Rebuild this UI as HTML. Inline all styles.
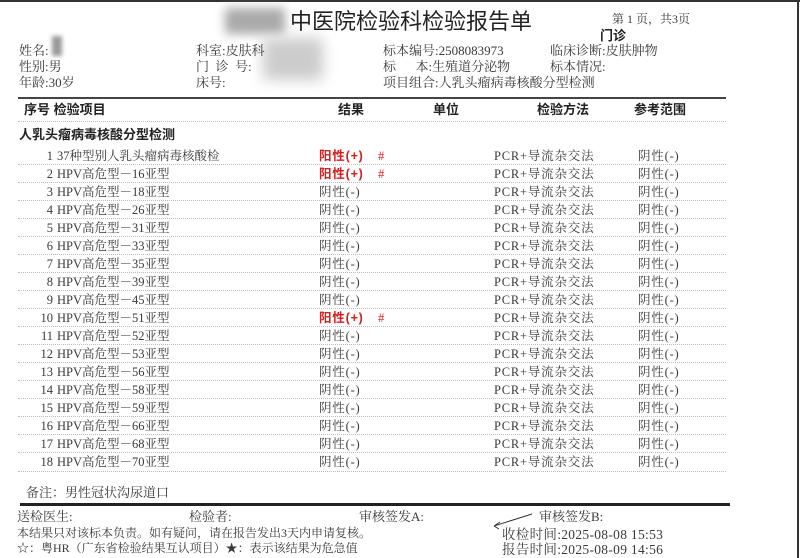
<!DOCTYPE html>
<html><head><meta charset="utf-8"><style>
body{margin:0;width:800px;height:558px;background:#fff;position:relative;overflow:hidden;font-family:"Liberation Serif","Noto Serif CJK SC",serif;color:#3a3a3a}
.a{position:absolute;white-space:nowrap;line-height:1}
.s{font-size:13px}
.b{font-family:"Liberation Sans","Noto Sans CJK SC",sans-serif;font-weight:bold;color:#222}
.r{color:#d02020;font-weight:bold;font-family:"Liberation Sans","Noto Sans CJK SC",sans-serif}
.dot{position:absolute;left:18px;width:708px;border-top:1px dotted #bbb;height:0}
.row{position:absolute;left:0;width:800px;height:18px;font-size:12.5px;line-height:18px}
.row span{position:absolute;white-space:nowrap}
.row span:nth-child(3),.row span:nth-child(5),.row span:nth-child(6){letter-spacing:0.8px}
.n{width:53px;text-align:right;left:0}
</style></head><body>
<div style="position:absolute;left:0;top:0;width:800px;height:2px;background:#333"></div>
<div style="position:absolute;left:797px;top:0;width:2px;height:558px;background:#333"></div>
<div class="a" style="left:225px;top:8px;width:60px;height:26px;background:#aaa;filter:blur(5px)"></div>
<div class="a" style="left:263px;top:38px;width:60px;height:42px;background:#ccc;filter:blur(7px)"></div>
<div class="a" style="left:52px;top:36px;width:10px;height:20px;background:#999;filter:blur(2px)"></div>
<div class="a" style="left:290px;top:11px;font-size:22px;font-family:'Liberation Sans','Noto Sans CJK SC',sans-serif;color:#222">中医院检验科检验报告单</div>
<div class="a" style="left:612px;top:13px;font-size:12px">第 1 页，共3页</div>
<div class="a b" style="left:600px;top:29px;font-size:13px">门诊</div>
<div class="a s" style="left:19px;top:44px">姓名:</div>
<div class="a s" style="left:19px;top:60px">性别:男</div>
<div class="a s" style="left:19px;top:76px">年龄:30岁</div>
<div class="a s" style="left:196px;top:44px">科室:皮肤科</div>
<div class="a s" style="left:196px;top:60px">门&nbsp;&nbsp;诊&nbsp;&nbsp;号:</div>
<div class="a s" style="left:196px;top:76px">床号:</div>
<div class="a s" style="left:383px;top:44px">标本编号:2508083973</div>
<div class="a s" style="left:383px;top:60px">标&nbsp;&nbsp;&nbsp;&nbsp;&nbsp;&nbsp;本:生殖道分泌物</div>
<div class="a s" style="left:383px;top:76px">项目组合:人乳头瘤病毒核酸分型检测</div>
<div class="a s" style="left:550px;top:44px">临床诊断:皮肤肿物</div>
<div class="a s" style="left:550px;top:60px">标本情况:</div>
<div style="position:absolute;left:18px;top:97px;width:708px;height:2px;background:#444"></div>
<div class="a b s" style="left:24px;top:103px">序号 检验项目</div>
<div class="a b s" style="left:338px;top:103px">结果</div>
<div class="a b s" style="left:433px;top:103px">单位</div>
<div class="a b s" style="left:537px;top:103px">检验方法</div>
<div class="a b s" style="left:634px;top:103px">参考范围</div>
<div class="dot" style="top:121px"></div>
<div class="a b s" style="left:19px;top:128px">人乳头瘤病毒核酸分型检测</div>

<div class="row" style="top:147px"><span class="n">1</span><span style="left:57px">37种型别人乳头瘤病毒核酸检</span><span class="r" style="left:319px">阳性(+)</span><span style="left:378px;color:#d02020">#</span><span style="left:494px">PCR+导流杂交法</span><span style="left:638px">阴性(-)</span></div>
<div class="dot" style="top:164px"></div>
<div class="row" style="top:165px"><span class="n">2</span><span style="left:57px">HPV高危型－16亚型</span><span class="r" style="left:319px">阳性(+)</span><span style="left:378px;color:#d02020">#</span><span style="left:494px">PCR+导流杂交法</span><span style="left:638px">阴性(-)</span></div>
<div class="dot" style="top:182px"></div>
<div class="row" style="top:183px"><span class="n">3</span><span style="left:57px">HPV高危型－18亚型</span><span style="left:319px">阴性(-)</span><span></span><span style="left:494px">PCR+导流杂交法</span><span style="left:638px">阴性(-)</span></div>
<div class="dot" style="top:200px"></div>
<div class="row" style="top:201px"><span class="n">4</span><span style="left:57px">HPV高危型－26亚型</span><span style="left:319px">阴性(-)</span><span></span><span style="left:494px">PCR+导流杂交法</span><span style="left:638px">阴性(-)</span></div>
<div class="dot" style="top:218px"></div>
<div class="row" style="top:219px"><span class="n">5</span><span style="left:57px">HPV高危型－31亚型</span><span style="left:319px">阴性(-)</span><span></span><span style="left:494px">PCR+导流杂交法</span><span style="left:638px">阴性(-)</span></div>
<div class="dot" style="top:236px"></div>
<div class="row" style="top:237px"><span class="n">6</span><span style="left:57px">HPV高危型－33亚型</span><span style="left:319px">阴性(-)</span><span></span><span style="left:494px">PCR+导流杂交法</span><span style="left:638px">阴性(-)</span></div>
<div class="dot" style="top:254px"></div>
<div class="row" style="top:255px"><span class="n">7</span><span style="left:57px">HPV高危型－35亚型</span><span style="left:319px">阴性(-)</span><span></span><span style="left:494px">PCR+导流杂交法</span><span style="left:638px">阴性(-)</span></div>
<div class="dot" style="top:272px"></div>
<div class="row" style="top:273px"><span class="n">8</span><span style="left:57px">HPV高危型－39亚型</span><span style="left:319px">阴性(-)</span><span></span><span style="left:494px">PCR+导流杂交法</span><span style="left:638px">阴性(-)</span></div>
<div class="dot" style="top:290px"></div>
<div class="row" style="top:291px"><span class="n">9</span><span style="left:57px">HPV高危型－45亚型</span><span style="left:319px">阴性(-)</span><span></span><span style="left:494px">PCR+导流杂交法</span><span style="left:638px">阴性(-)</span></div>
<div class="dot" style="top:308px"></div>
<div class="row" style="top:309px"><span class="n">10</span><span style="left:57px">HPV高危型－51亚型</span><span class="r" style="left:319px">阳性(+)</span><span style="left:378px;color:#d02020">#</span><span style="left:494px">PCR+导流杂交法</span><span style="left:638px">阴性(-)</span></div>
<div class="dot" style="top:326px"></div>
<div class="row" style="top:327px"><span class="n">11</span><span style="left:57px">HPV高危型－52亚型</span><span style="left:319px">阴性(-)</span><span></span><span style="left:494px">PCR+导流杂交法</span><span style="left:638px">阴性(-)</span></div>
<div class="dot" style="top:344px"></div>
<div class="row" style="top:345px"><span class="n">12</span><span style="left:57px">HPV高危型－53亚型</span><span style="left:319px">阴性(-)</span><span></span><span style="left:494px">PCR+导流杂交法</span><span style="left:638px">阴性(-)</span></div>
<div class="dot" style="top:362px"></div>
<div class="row" style="top:363px"><span class="n">13</span><span style="left:57px">HPV高危型－56亚型</span><span style="left:319px">阴性(-)</span><span></span><span style="left:494px">PCR+导流杂交法</span><span style="left:638px">阴性(-)</span></div>
<div class="dot" style="top:380px"></div>
<div class="row" style="top:381px"><span class="n">14</span><span style="left:57px">HPV高危型－58亚型</span><span style="left:319px">阴性(-)</span><span></span><span style="left:494px">PCR+导流杂交法</span><span style="left:638px">阴性(-)</span></div>
<div class="dot" style="top:398px"></div>
<div class="row" style="top:399px"><span class="n">15</span><span style="left:57px">HPV高危型－59亚型</span><span style="left:319px">阴性(-)</span><span></span><span style="left:494px">PCR+导流杂交法</span><span style="left:638px">阴性(-)</span></div>
<div class="dot" style="top:416px"></div>
<div class="row" style="top:417px"><span class="n">16</span><span style="left:57px">HPV高危型－66亚型</span><span style="left:319px">阴性(-)</span><span></span><span style="left:494px">PCR+导流杂交法</span><span style="left:638px">阴性(-)</span></div>
<div class="dot" style="top:434px"></div>
<div class="row" style="top:435px"><span class="n">17</span><span style="left:57px">HPV高危型－68亚型</span><span style="left:319px">阴性(-)</span><span></span><span style="left:494px">PCR+导流杂交法</span><span style="left:638px">阴性(-)</span></div>
<div class="dot" style="top:452px"></div>
<div class="row" style="top:453px"><span class="n">18</span><span style="left:57px">HPV高危型－70亚型</span><span style="left:319px">阴性(-)</span><span></span><span style="left:494px">PCR+导流杂交法</span><span style="left:638px">阴性(-)</span></div>
<div class="dot" style="top:471px"></div>

<div class="a s" style="left:26px;top:486px">备注：男性冠状沟尿道口</div>
<div style="position:absolute;left:20px;top:503px;width:710px;height:3px;background:#222"></div>
<div class="a s" style="left:17px;top:510px">送检医生:</div>
<div class="a s" style="left:189px;top:510px">检验者:</div>
<div class="a s" style="left:359px;top:510px">审核签发A:</div>
<div class="a s" style="left:539px;top:510px">审核签发B:</div>
<svg style="position:absolute;left:490px;top:512px" width="45" height="18"><path d="M42 2 L4 14 M4 14 l6 -4 M4 14 l5 3" stroke="#333" stroke-width="1" fill="none"/></svg>
<div class="a" style="left:17px;top:527px;font-size:12px">本结果只对该标本负责。如有疑问，请在报告发出3天内申请复核。</div>
<div class="a" style="left:17px;top:542px;font-size:12px">☆：粤HR（广东省检验结果互认项目）★：表示该结果为危急值</div>
<div class="a" style="left:502px;top:528px;font-size:13.5px;letter-spacing:0.3px">收检时间:2025-08-08 15:53</div>
<div class="a" style="left:502px;top:543px;font-size:13.5px;letter-spacing:0.3px">报告时间:2025-08-09 14:56</div>
</body></html>
